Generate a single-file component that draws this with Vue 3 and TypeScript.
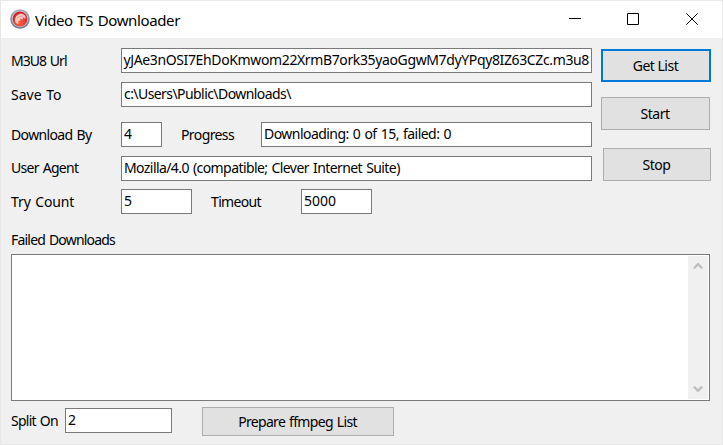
<script setup lang="ts">
import { ref } from 'vue'

const url = ref('yJAe3nOSI7EhDoKmwom22XrmB7ork35yaoGgwM7dyYPqy8IZ63CZc.m3u8')
const saveTo = ref('c:\\Users\\Public\\Downloads\\')
const downloadBy = ref('4')
const progress = ref('Downloading: 0 of 15, failed: 0')
const userAgent = ref('Mozilla/4.0 (compatible; Clever Internet Suite)')
const tryCount = ref('5')
const timeout = ref('5000')
const splitOn = ref('2')
</script>

<template>
  <div class="window">
    <header class="titlebar">
      <svg class="logo" viewBox="0 0 20 20">
        <defs>
          <linearGradient id="ring" x1="0" y1="0" x2="0" y2="1">
            <stop offset="0" stop-color="#a9adb8" />
            <stop offset="1" stop-color="#70778d" />
          </linearGradient>
          <radialGradient id="ball" cx=".5" cy=".75" r=".65">
            <stop offset="0" stop-color="#ff6040" />
            <stop offset="1" stop-color="#d3202a" />
          </radialGradient>
        </defs>
        <circle cx="10" cy="10" r="9.8" fill="url(#ring)" />
        <circle cx="10" cy="10" r="8.2" fill="#c9cad3" />
        <circle cx="10" cy="10" r="7.4" fill="url(#ball)" />
        <path d="M5 11.500C5 7 8.500 4.300 12 4.800C14.800 5.300 16 7.500 15.500 9.800L12.800 8.300L13 10.500L10.300 9.700L10.200 12L8.500 11.500L8.200 15C6 14.500 5 13.500 5 11.500Z" fill="#ffd9d3" opacity=".9" />
        <path d="M7 9.500Q9.500 6.500 13 7.200" fill="none" stroke="#f07a70" stroke-width=".6" />
      </svg>
      <h1 class="title">Video TS Downloader</h1>
      <div class="controls">
        <svg viewBox="0 0 12 12"><path d="M0 5.500H12" /></svg>
        <svg viewBox="0 0 12 12"><path d="M.5 .5H11.500V11.500H.5Z" /></svg>
        <svg class="close" viewBox="0 0 12 12"><path d="M.3 .3L11.700 11.700M11.700 .3L.3 11.700" /></svg>
      </div>
    </header>

    <main class="body">
      <div class="top">
        <div class="fields">
          <div class="row">
            <label class="w110 t-url">M3U8 Url</label>
            <div class="edit grow end"><span class="v-url">{{ url }}</span></div>
          </div>
          <div class="row r2">
            <label class="w110">Save To</label>
            <div class="edit grow"><span class="v-save">{{ saveTo }}</span></div>
          </div>
          <div class="row r3">
            <label class="w110 t-by">Download By</label>
            <div class="edit w41"><span>{{ downloadBy }}</span></div>
            <label class="progress">Progress</label>
            <div class="edit grow"><span class="v-prog">{{ progress }}</span></div>
          </div>
          <div class="row r4">
            <label class="w110 t-agent">User Agent</label>
            <div class="edit grow"><span class="v-agent">{{ userAgent }}</span></div>
          </div>
          <div class="row r5">
            <label class="w110 t-try">Try Count</label>
            <div class="edit w71"><span>{{ tryCount }}</span></div>
            <label class="timeout">Timeout</label>
            <div class="edit w71"><span>{{ timeout }}</span></div>
          </div>
        </div>
        <div class="actions">
          <button class="btn primary">Get List</button>
          <button class="btn start">Start</button>
          <button class="btn stop">Stop</button>
        </div>
      </div>

      <label class="failed">Failed Downloads</label>
      <div class="memo">
        <div class="scroll">
          <svg viewBox="0 0 10 8"><path d="M.8 6.300L5 2.100L9.200 6.300" /></svg>
          <svg viewBox="0 0 10 8"><path d="M.8 1.700L5 5.900L9.200 1.700" /></svg>
        </div>
      </div>

      <div class="bottom">
        <label class="split">Split On</label>
        <div class="edit w107"><span>{{ splitOn }}</span></div>
        <button class="btn prepare">Prepare ffmpeg List</button>
      </div>
    </main>
  </div>
</template>

<style>
body { margin: 0; overflow: hidden; }
</style>

<style scoped>
.window {
  box-sizing: border-box;
  width: 723px;
  height: 445px;
  border: 1px solid #e8e8e8;
  background: #f0f0f0;
  color: #000;
  font: 14px/17px "Noto Sans", "Open Sans", sans-serif;
  word-spacing: 1px;
  overflow: hidden;
}
.titlebar {
  box-sizing: border-box;
  display: flex;
  align-items: center;
  height: 37px;
  padding-bottom: 1px;
  background: #fff;
}
.logo { width: 20px; height: 20px; margin-left: 9px; }
.title {
  margin: 1px 0 0 5px;
  font-size: 15px;
  line-height: 20px;
  font-weight: 400;
  letter-spacing: -0.37px;
  white-space: nowrap;
}
.controls { display: flex; gap: 46px; margin-left: auto; padding-right: 24px; }
.controls svg {
  width: 12px;
  height: 12px;
  fill: none;
  stroke: #000;
  stroke-width: 1;
}
.controls .close { margin-left: 1px; }
.body { padding: 10px 11px 0 10px; }
.top { display: flex; gap: 9px; }
.fields { width: 581px; }
.row { display: flex; height: 25px; }
.r2 { margin-top: 9px; }
.r3 { margin-top: 15px; }
.r4 { margin-top: 9px; }
.r5 { margin-top: 8px; }
label { white-space: nowrap; padding-top: 4px; flex: none; box-sizing: border-box; }
.w110 { width: 110px; }
.t-url { letter-spacing: -0.95px; }
.t-by { letter-spacing: -0.64px; }
.t-agent { letter-spacing: -0.72px; padding-top: 3px; }
.t-try { letter-spacing: -0.12px; }
.edit {
  box-sizing: border-box;
  height: 25px;
  border: 1px solid #7a7a7a;
  background: #fff;
  padding: 2px 2px 0;
  display: flex;
  white-space: nowrap;
}
.edit span { flex: none; }
.end { justify-content: flex-end; }
.grow { flex: 1; min-width: 0; }
.w41 { width: 41px; }
.w71 { width: 71px; }
.w107 { width: 107px; }
.v-url { letter-spacing: -0.37px; }
.v-save { letter-spacing: -0.57px; }
.v-prog { letter-spacing: -0.54px; }
.v-agent { letter-spacing: -0.58px; }
.progress { width: 99px; padding-left: 19px; letter-spacing: -0.6px; }
.timeout { width: 109px; padding-left: 19px; letter-spacing: -0.65px; }
.actions { display: flex; flex-direction: column; padding-top: 1px; }
.btn {
  box-sizing: border-box;
  display: flex;
  align-items: center;
  justify-content: center;
  width: 109px;
  height: 33px;
  padding: 0 1px 1px 0;
  border: 1px solid #adadad;
  background: #e1e1e1;
  color: #000;
  font: inherit;
  letter-spacing: -0.5px;
  white-space: nowrap;
}
.primary { width: 110px; border: 2px solid #0078d7; }
.start { margin-top: 15px; }
.stop { margin: 18px 0 0 2px; width: 108px; }
.failed { display: block; height: 40px; padding-top: 17px; letter-spacing: -0.8px; }
.memo {
  box-sizing: border-box;
  width: 699px;
  height: 147px;
  border: 1px solid #7a7a7a;
  background: #fff;
  padding: 1px;
  display: flex;
  justify-content: flex-end;
}
.scroll {
  box-sizing: border-box;
  width: 20px;
  background: #f0f0f0;
  display: flex;
  flex-direction: column;
  justify-content: space-between;
  align-items: center;
  padding: 6px 0;
}
.scroll svg { width: 10px; height: 8px; fill: none; stroke: #bfbfbf; stroke-width: 2.4; }
.bottom { display: flex; padding-top: 6px; }
.bottom .edit { margin-top: 1px; }
.split { width: 54px; padding-top: 5px; letter-spacing: -0.75px; }
.prepare { margin-left: 30px; width: 192px; height: 29px; letter-spacing: -0.68px; word-spacing: 1px; }
</style>
